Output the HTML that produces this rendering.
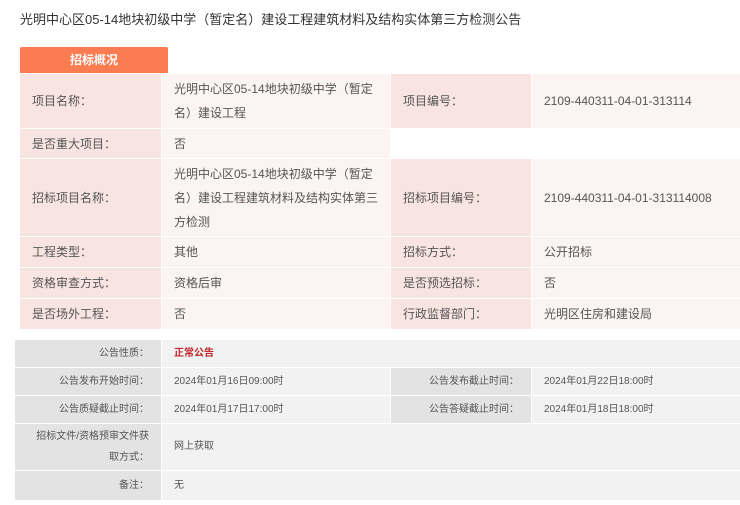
<!DOCTYPE html>
<html><head><meta charset="utf-8"><style>
*{margin:0;padding:0;box-sizing:border-box}
body{width:740px;height:505px;background:#fff;position:relative;overflow:hidden;font-family:"Liberation Sans","Noto Sans CJK SC",sans-serif;color:#555}
.c{position:absolute;display:flex;align-items:center;font-size:12px;line-height:24px}
.l{background:#f8e5e1;padding-left:12px}
.v{background:#fbf4f2;padding-left:12px;padding-right:8px}
.bl{background:#e3e3e3;justify-content:flex-end;padding-right:12px;padding-left:6px;font-size:10px;line-height:21px;text-align:right;color:#555}
.bv{background:#f2f2f2;padding-left:12px;font-size:10px;color:#555}
</style></head><body>
<div style="position:absolute;left:20px;top:9px;font-size:13px;color:#333">光明中心区05-14地块初级中学（暂定名）建设工程建筑材料及结构实体第三方检测公告</div>
<div style="position:absolute;left:20px;top:47px;width:148px;height:26px;background:#fc7c52;border-radius:2px 2px 0 0;color:#fff;font-size:12px;font-weight:bold;text-align:center;line-height:26px">招标概况</div>

<div class="c l" style="left:20px;top:74px;width:141px;height:54px">项目名称：</div>
<div class="c v" style="left:162px;top:74px;width:228px;height:54px">光明中心区05-14地块初级中学（暂定名）建设工程</div>
<div class="c l" style="left:391px;top:74px;width:140px;height:54px">项目编号：</div>
<div class="c v" style="left:532px;top:74px;width:208px;height:54px">2109-440311-04-01-313114</div>

<div class="c l" style="left:20px;top:129px;width:141px;height:29px">是否重大项目：</div>
<div class="c v" style="left:162px;top:129px;width:228px;height:29px">否</div>

<div class="c l" style="left:20px;top:159px;width:141px;height:77px">招标项目名称：</div>
<div class="c v" style="left:162px;top:159px;width:228px;height:77px">光明中心区05-14地块初级中学（暂定名）建设工程建筑材料及结构实体第三方检测</div>
<div class="c l" style="left:391px;top:159px;width:140px;height:77px">招标项目编号：</div>
<div class="c v" style="left:532px;top:159px;width:208px;height:77px">2109-440311-04-01-313114008</div>

<div class="c l" style="left:20px;top:237px;width:141px;height:30px">工程类型：</div>
<div class="c v" style="left:162px;top:237px;width:228px;height:30px">其他</div>
<div class="c l" style="left:391px;top:237px;width:140px;height:30px">招标方式：</div>
<div class="c v" style="left:532px;top:237px;width:208px;height:30px">公开招标</div>

<div class="c l" style="left:20px;top:268px;width:141px;height:30px">资格审查方式：</div>
<div class="c v" style="left:162px;top:268px;width:228px;height:30px">资格后审</div>
<div class="c l" style="left:391px;top:268px;width:140px;height:30px">是否预选招标：</div>
<div class="c v" style="left:532px;top:268px;width:208px;height:30px">否</div>

<div class="c l" style="left:20px;top:299px;width:141px;height:30px">是否场外工程：</div>
<div class="c v" style="left:162px;top:299px;width:228px;height:30px">否</div>
<div class="c l" style="left:391px;top:299px;width:140px;height:30px">行政监督部门：</div>
<div class="c v" style="left:532px;top:299px;width:208px;height:30px">光明区住房和建设局</div>

<div class="c bl" style="left:15px;top:340px;width:146px;height:27px">公告性质：</div>
<div class="c bv" style="left:162px;top:340px;width:578px;height:27px;color:#c0282d;font-weight:bold">正常公告</div>

<div class="c bl" style="left:15px;top:368px;width:146px;height:27px">公告发布开始时间：</div>
<div class="c bv" style="left:162px;top:368px;width:228px;height:27px">2024年01月16日09:00时</div>
<div class="c bl" style="left:391px;top:368px;width:140px;height:27px">公告发布截止时间：</div>
<div class="c bv" style="left:532px;top:368px;width:208px;height:27px">2024年01月22日18:00时</div>

<div class="c bl" style="left:15px;top:396px;width:146px;height:27px">公告质疑截止时间：</div>
<div class="c bv" style="left:162px;top:396px;width:228px;height:27px">2024年01月17日17:00时</div>
<div class="c bl" style="left:391px;top:396px;width:140px;height:27px">公告答疑截止时间：</div>
<div class="c bv" style="left:532px;top:396px;width:208px;height:27px">2024年01月18日18:00时</div>

<div class="c bl" style="left:15px;top:424px;width:146px;height:46px"><div>招标文件/资格预审文件获<br>取方式：</div></div>
<div class="c bv" style="left:162px;top:424px;width:578px;height:46px">网上获取</div>

<div class="c bl" style="left:15px;top:471px;width:146px;height:29px">备注：</div>
<div class="c bv" style="left:162px;top:471px;width:578px;height:29px">无</div>
</body></html>
